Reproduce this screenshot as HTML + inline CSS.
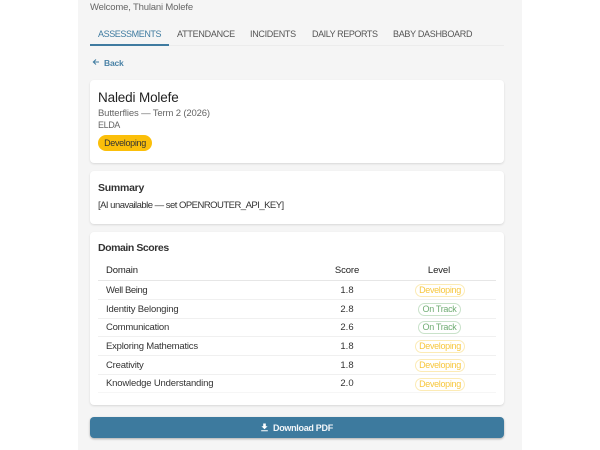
<!DOCTYPE html>
<html><head><meta charset="utf-8">
<style>
html,body{margin:0;padding:0;width:600px;height:450px;overflow:hidden;background:#fff}
body{font-family:"Liberation Sans",sans-serif;position:relative}
#c{position:absolute;left:78px;top:0;width:444px;height:450px;background:#f5f5f5}
.t{position:absolute;white-space:nowrap;line-height:12px}
.card{position:absolute;left:90px;width:414px;background:#fff;border-radius:4px;box-shadow:0 1px 2px rgba(0,0,0,.12)}
.tab{font-size:9px;color:#555;top:28px}
.d{font-size:9.5px;color:#333;left:106px;letter-spacing:-.2px}
.s{font-size:9.5px;color:#333;left:327px;width:40px;text-align:center}
.l{position:absolute;height:13px;line-height:11px;box-sizing:border-box;border-radius:7px;font-size:9px;text-align:center;letter-spacing:-.32px;white-space:nowrap}
.dev{left:415px;width:50px;color:#f7c73e;border:1px solid #fcebb5}
.on{left:418px;width:43px;color:#71ad74;border:1px solid #c9e2ca}
.hr{position:absolute;left:98px;width:398px;height:1px;background:#f0f0f0}
</style></head><body>
<div id="c"></div>
<div class="t" style="left:90px;top:2px;font-size:9.5px;color:#666;letter-spacing:-.17px">Welcome, Thulani Molefe</div>
<div class="t tab" style="left:98px;color:#3f7ba0;letter-spacing:-.4px">ASSESSMENTS</div>
<div class="t tab" style="left:177px;letter-spacing:-.25px">ATTENDANCE</div>
<div class="t tab" style="left:250px;letter-spacing:-.3px">INCIDENTS</div>
<div class="t tab" style="left:312px;letter-spacing:-.42px">DAILY REPORTS</div>
<div class="t tab" style="left:393px;letter-spacing:-.3px">BABY DASHBOARD</div>
<div style="position:absolute;left:90px;top:45px;width:414px;height:1px;background:#ececec"></div>
<div style="position:absolute;left:90px;top:44px;width:79px;height:2px;background:#3f7ba0"></div>
<svg style="position:absolute;left:92px;top:58px" width="8" height="8" viewBox="0 0 8 8"><path d="M7 4H1.5M4 1.5L1.3 4L4 6.5" fill="none" stroke="#3f7ba0" stroke-width="1"/></svg>
<div class="t" style="left:104px;top:57px;font-size:8.5px;font-weight:bold;color:#4a82a6;letter-spacing:-.2px">Back</div>

<div class="card" style="top:80px;height:83px"></div>
<div class="t" style="left:98px;top:91px;font-size:13.5px;color:#222;line-height:14px;letter-spacing:-.15px">Naledi Molefe</div>
<div class="t" style="left:98px;top:108px;font-size:9.5px;color:#666;letter-spacing:-.15px">Butterflies — Term 2 (2026)</div>
<div class="t" style="left:98px;top:119px;font-size:9px;color:#666;letter-spacing:-.4px">ELDA</div>
<div class="l" style="left:98px;top:135px;width:54px;height:16px;line-height:16px;border-radius:8px;background:#fbbf0a;color:#333">Developing</div>

<div class="card" style="top:171px;height:53px"></div>
<div class="t" style="left:98px;top:182px;font-size:10.5px;font-weight:bold;color:#333;letter-spacing:-.25px">Summary</div>
<div class="t" style="left:98px;top:200px;font-size:9.5px;color:#333;letter-spacing:-.52px">[AI unavailable — set OPENROUTER_API_KEY]</div>

<div class="card" style="top:232px;height:173px"></div>
<div class="t" style="left:98px;top:242px;font-size:10.5px;font-weight:bold;color:#333;letter-spacing:-.44px">Domain Scores</div>
<div class="t d" style="top:265px;color:#222;letter-spacing:-.15px">Domain</div>
<div class="t s" style="top:265px;color:#222;letter-spacing:-.1px">Score</div>
<div class="t" style="left:419px;width:40px;text-align:center;top:265px;font-size:9.5px;color:#222;letter-spacing:-.1px">Level</div>
<div class="hr" style="top:280px;background:#e6e6e6"></div>
<div class="hr" style="top:299px"></div>
<div class="hr" style="top:318px"></div>
<div class="hr" style="top:336px"></div>
<div class="hr" style="top:355px"></div>
<div class="hr" style="top:374px"></div>
<div class="hr" style="top:392px;background:#f6f6f6"></div>

<div class="t d" style="top:285px;letter-spacing:-.4px">Well Being</div><div class="t s" style="top:285px">1.8</div><div class="l dev" style="top:284px">Developing</div>
<div class="t d" style="top:304px;letter-spacing:-.17px">Identity Belonging</div><div class="t s" style="top:304px">2.8</div><div class="l on" style="top:303px">On Track</div>
<div class="t d" style="top:322px;letter-spacing:-.23px">Communication</div><div class="t s" style="top:322px">2.6</div><div class="l on" style="top:321px">On Track</div>
<div class="t d" style="top:341px">Exploring Mathematics</div><div class="t s" style="top:341px">1.8</div><div class="l dev" style="top:340px">Developing</div>
<div class="t d" style="top:360px">Creativity</div><div class="t s" style="top:360px">1.8</div><div class="l dev" style="top:359px">Developing</div>
<div class="t d" style="top:378px;letter-spacing:-.18px">Knowledge Understanding</div><div class="t s" style="top:378px">2.0</div><div class="l dev" style="top:378px">Developing</div>

<div style="position:absolute;left:90px;top:417px;width:414px;height:21px;background:#3d7a9e;border-radius:4px;box-shadow:0 1px 2px rgba(0,0,0,.3)"></div>
<svg style="position:absolute;left:260px;top:423px" width="9" height="9" viewBox="0 0 9 9"><path d="M3.2 0.5H5.8V3.2H7.6L4.5 6.2L1.4 3.2H3.2ZM1.2 7.2H7.8V8.2H1.2Z" fill="#fff"/></svg>
<div class="t" style="left:273px;top:422px;font-size:9px;font-weight:bold;color:#f2f6f9;letter-spacing:-.3px">Download PDF</div>
</body></html>
